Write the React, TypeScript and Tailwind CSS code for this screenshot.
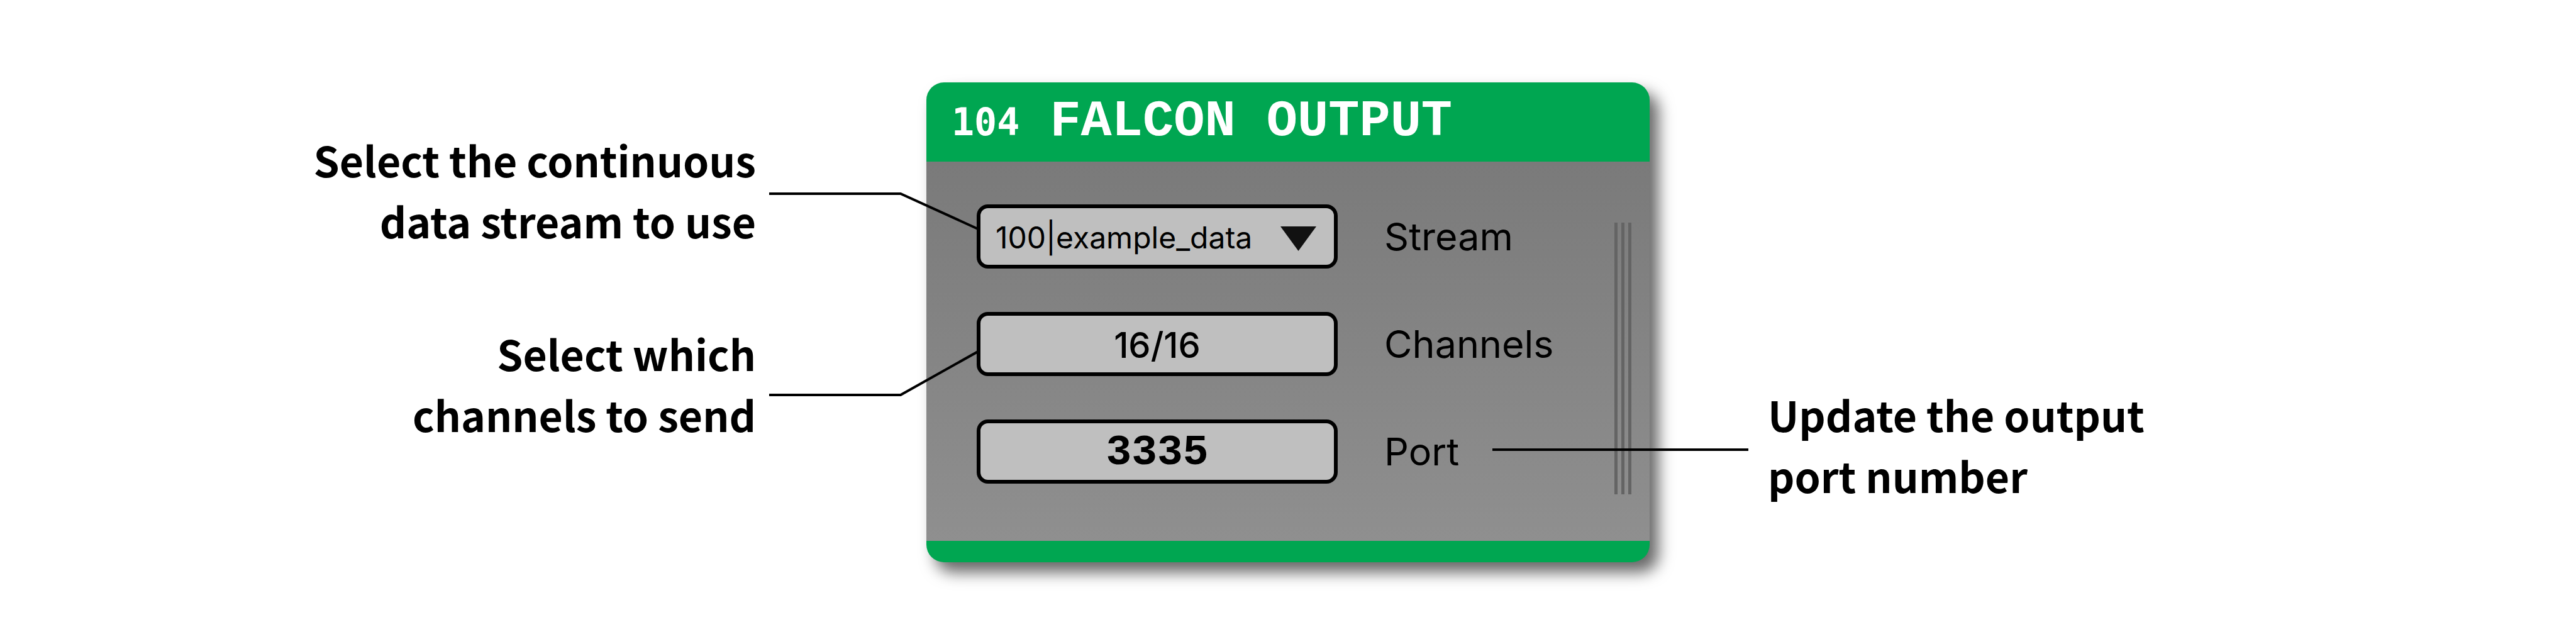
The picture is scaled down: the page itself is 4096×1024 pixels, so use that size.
import React, { useState } from "react";

const FIELD =
  "block h-[102px] w-full appearance-none rounded-[18px] border-6 border-black bg-[#bfbfbf] text-black outline-none";

function Caption({ lines }: { lines: string[] }) {
  return (
    <p className="font-['Noto_Sans_CJK_SC',sans-serif] text-[66px] leading-[97px] font-semibold whitespace-nowrap text-black">
      {lines.map((line) => (
        <span key={line} className="block">
          {line}
        </span>
      ))}
    </p>
  );
}

function Row({
  id,
  label,
  children,
  overlay,
}: {
  id: string;
  label: string;
  children: React.ReactNode;
  overlay?: React.ReactNode;
}) {
  return (
    <div className="flex items-center gap-[74px]">
      <div className="relative min-w-0 flex-1">{children}</div>
      <div className="relative w-[366px]">
        <label htmlFor={id} className="block text-[61px] leading-[72px] text-black">
          {label}
        </label>
        {overlay}
      </div>
    </div>
  );
}

export default function App() {
  const [port, setPort] = useState("3335");

  return (
    <main className="grid min-h-screen grid-cols-[1473fr_1150fr_1473fr] content-center bg-white font-['Inter',sans-serif]">
      <div className="flex flex-col items-end gap-[114px] pt-[74px] pr-[271px] text-right">
        <Caption lines={["Select the continuous", "data stream to use"]} />
        <Caption lines={["Select which", "channels to send"]} />
      </div>

      <section className="relative flex flex-col rounded-[28px] bg-[#00a651] shadow-[14px_16px_24px_rgba(0,0,0,0.6)]">
        <header className="flex h-[126px] items-center rounded-t-[28px] pl-10 text-white">
          <h1 className="flex items-baseline gap-12 whitespace-nowrap">
            <span className="font-['DejaVu_Sans_Mono',monospace] text-[60px] leading-[80px] font-bold">104</span>
            <span className="font-['Liberation_Mono',monospace] text-[82px] leading-[92px] font-bold">
              FALCON OUTPUT
            </span>
          </h1>
        </header>

        <form
          className="flex bg-linear-to-b from-[#7a7a7a] to-[#8f8f8f] pt-[68px] pr-[29px] pb-[91px] pl-20"
          onSubmit={(e) => e.preventDefault()}
        >
          <div className="flex min-w-0 flex-1 flex-col gap-[69px]">
            <Row id="stream" label="Stream">
              <select id="stream" className={`${FIELD} pt-1 pl-6 text-[48px]`}>
                <option>100|example_data</option>
              </select>
              <svg
                className="pointer-events-none absolute top-[35px] right-[34px] h-[39px] w-[57px]"
                viewBox="0 0 57 39"
                aria-hidden="true"
              >
                <path d="M0 0H57L28.5 39Z" fill="#111" />
              </svg>
              <svg
                className="pointer-events-none absolute -top-[19px] right-full h-[60px] w-[330px]"
                viewBox="0 0 330 60"
                aria-hidden="true"
              >
                <path d="M0 2H209L332 58" fill="none" stroke="#000" strokeWidth="4" />
              </svg>
            </Row>
            <Row id="channels" label="Channels">
              <button id="channels" type="button" className={`${FIELD} pt-1 text-center text-[56px] font-medium`}>
                16/16
              </button>
              <svg
                className="pointer-events-none absolute top-[60px] right-full h-[76px] w-[330px]"
                viewBox="0 0 330 76"
                aria-hidden="true"
              >
                <path d="M0 72H209L332 3" fill="none" stroke="#000" strokeWidth="4" />
              </svg>
            </Row>
            <Row
              id="port"
              label="Port"
              overlay={<span className="absolute top-[31px] left-[172px] z-10 h-1 w-[407px] bg-black" />}
            >
              <input
                id="port"
                type="text"
                inputMode="numeric"
                value={port}
                onChange={(e) => setPort(e.target.value)}
                className={`${FIELD} pt-1 text-center font-['Liberation_Mono',monospace] text-[68px] font-bold`}
              />
            </Row>
          </div>
          <div className="mt-[29px] -mb-[17px] flex gap-[6px]">
            <span className="w-[5px] bg-[#646464]" />
            <span className="w-[5px] bg-[#646464]" />
            <span className="w-[5px] bg-[#646464]" />
          </div>
        </form>

        <footer className="h-[34px]" />
      </section>

      <div className="pt-[479px] pl-[188px]">
        <Caption lines={["Update the output", "port number"]} />
      </div>
    </main>
  );
}
